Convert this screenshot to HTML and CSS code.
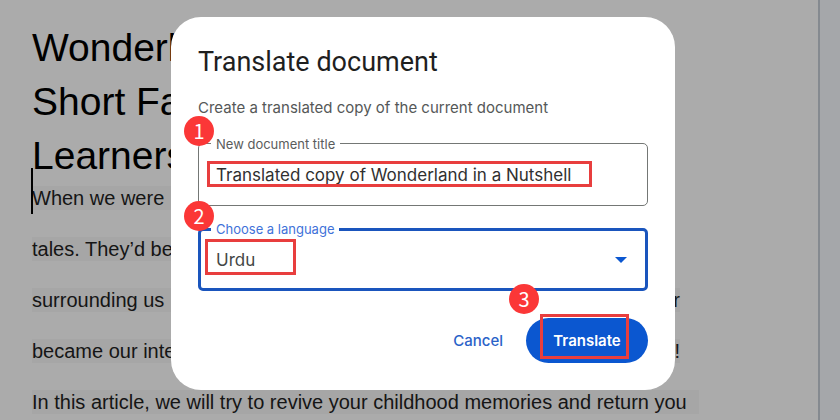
FILE: index.html
```html
<!DOCTYPE html>
<html lang="en">
<head>
  <meta charset="UTF-8" />
  <meta name="viewport" content="width=device-width, initial-scale=1" />
  <title>Translate document</title>
  <link rel="stylesheet" href="styles.css">
</head>
<body>
  <div class="workspace">
    <main class="page">
      <h1 class="page-title">Wonderl<br>Short Fa<br>Learners</h1>
      <div class="page-text">
        <p class="line short"><span class="caret"></span><span>When we were</span></p>
        <p class="line short"><span>tales. They’d be</span></p>
        <p class="line"><span>surrounding us</span><span>r</span></p>
        <p class="line"><span>became our inte</span><span>!</span></p>
        <p class="line short">In this article, we will try to revive your childhood memories and return you</p>
      </div>
    </main>
  </div>

  <div class="overlay">
    <form class="dialog" role="dialog" aria-labelledby="dialog-title">
      <h2 id="dialog-title">Translate document</h2>
      <p class="intro">Create a translated copy of the current document</p>

      <div class="field">
        <label for="doc-title">New document title</label>
        <input type="text" id="doc-title" value="Translated copy of Wonderland in a Nutshell">
        <span class="mark mark-title"></span>
        <span class="step">1</span>
      </div>

      <div class="field active">
        <label for="language">Choose a language</label>
        <select id="language">
          <option>Urdu</option>
        </select>
        <svg class="arrow" width="12" height="6" viewBox="0 0 12 6"><path d="M0 0h12L6 6z" fill="#0b57d0"/></svg>
        <span class="mark mark-language"></span>
        <span class="step">2</span>
      </div>

      <div class="actions">
        <button type="button" class="cancel">Cancel</button>
        <div class="submit-wrap">
          <button type="button" class="submit">Translate</button>
          <span class="mark mark-submit"></span>
          <span class="step step-submit">3</span>
        </div>
      </div>
    </form>
  </div>
</body>
</html>
```
FILE: styles.css
```css
* {
  box-sizing: border-box;
}

body {
  margin: 0;
  height: 100vh;
  overflow: hidden;
  background-color: #a5a7aa;
  font-family: Inter, "Liberation Sans", sans-serif;
}

/* Document behind the dialog */
.workspace {
  height: 100%;
  padding-right: 20px;
}

.page {
  min-height: 100%;
  padding: 21px 32px 0;
  background-color: #ababab;
  border-right: 2px solid #858a90;
  font-family: "Liberation Sans", Arial, sans-serif;
}

.page-title {
  margin: 0 0 3px;
  font-size: 39px;
  font-weight: 400;
  line-height: 54px;
  color: #000;
}

.page-text {
  display: flex;
  flex-direction: column;
  align-items: flex-start;
  gap: 27px;
}

.line {
  position: relative;
  display: flex;
  justify-content: space-between;
  width: 100%;
  max-width: 648px;
  margin: 0;
  background-color: #a6a6a6;
  font-size: 20px;
  line-height: 24px;
  white-space: nowrap;
  color: #151515;
}

.line.short {
  width: auto;
  max-width: none;
  padding-right: 12px;
}

.caret {
  position: absolute;
  left: -1px;
  bottom: -4px;
  width: 2px;
  height: 46px;
  background-color: #000;
}

/* Dialog */
.overlay {
  position: fixed;
  inset: 0;
  display: flex;
  justify-content: center;
  align-items: flex-start;
  padding: 17px 0 0 6px;
}

.dialog {
  width: 60%;
  min-width: 504px;
  padding: 27px;
  background-color: #fff;
  border-radius: 30px;
}

.dialog h2 {
  margin: 0 0 16px;
  font-family: Roboto, sans-serif;
  font-size: 27px;
  font-weight: 400;
  line-height: 36px;
  color: #1f1f1f;
}

.intro {
  margin: 0 0 23px;
  font-size: 15px;
  line-height: 24px;
  color: #555858;
}

/* Fields */
.field {
  position: relative;
  margin-bottom: 22px;
}

.field label {
  position: absolute;
  top: -8px;
  left: 13px;
  padding: 0 5px;
  background-color: #fff;
  font-size: 13px;
  line-height: 18px;
  color: #5a5c5c;
}

.field input,
.field select {
  display: block;
  width: 100%;
  height: 63px;
  padding: 0 17px;
  border: 1px solid #747775;
  border-radius: 5px;
  background-color: #fff;
  font-family: inherit;
  font-size: 17px;
  color: #303030;
  outline: none;
  appearance: none;
}

.field.active {
  margin-bottom: 27px;
}

.field.active label {
  color: #3f72d9;
}

.field.active select {
  padding: 0 15px;
  border: 3px solid #1a55bd;
  color: #444746;
}

.arrow {
  position: absolute;
  top: 29px;
  right: 21px;
}

/* Buttons */
.actions {
  display: flex;
  justify-content: flex-end;
  align-items: center;
  gap: 8px;
}

.actions button {
  height: 45px;
  border: none;
  border-radius: 23px;
  font-family: inherit;
  font-size: 15px;
  cursor: pointer;
}

.actions .cancel {
  padding: 0 15px;
  background: none;
  font-weight: 500;
  color: #2a62c8;
}

.submit-wrap {
  position: relative;
}

.actions .submit {
  width: 122px;
  background-color: #0b57d0;
  font-weight: 600;
  color: #fff;
}

/* Step markers */
.mark {
  position: absolute;
  border: 3px solid #e83e3e;
  pointer-events: none;
}

.mark-title {
  top: 18px;
  left: 9px;
  width: 385px;
  height: 26px;
}

.mark-language {
  top: 11px;
  left: 7px;
  width: 91px;
  height: 36px;
}

.mark-submit {
  top: -4px;
  left: 14px;
  width: 89px;
  height: 45px;
}

.step {
  position: absolute;
  top: -27px;
  left: -14px;
  width: 30px;
  height: 30px;
  border-radius: 50%;
  background-color: #fb3737;
  font-family: "Noto Sans CJK SC", sans-serif;
  font-size: 20px;
  line-height: 30px;
  text-align: center;
  color: #fff;
}

.step-submit {
  top: -34px;
  left: -17px;
}
```
